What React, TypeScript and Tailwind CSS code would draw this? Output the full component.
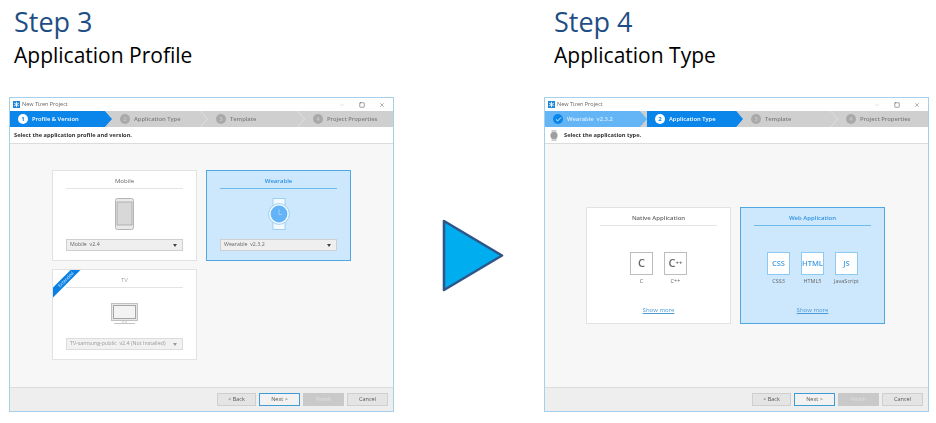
import { Minus, Square, X, Check } from "lucide-react";

type StepDef = { n: string; label: string; width: string; state: "done" | "active" | "idle" };

function Chevron({ color }: { color: string }) {
  return (
    <svg className="absolute right-0 top-0 h-4 w-[8px]" viewBox="0 0 8 16">
      <path d="M0.5 0 L7.5 8 L0.5 16" fill="none" stroke={color} strokeWidth="0.7" />
    </svg>
  );
}

function StepItem({ step, next }: { step: StepDef; next?: StepDef }) {
  const fill = step.state === "done" ? "#63b5f6" : "#0a85ea";
  return (
    <div className={`relative flex h-4 shrink-0 items-center ${step.width}`}>
      {step.state !== "idle" && (
        <svg className="absolute left-0 top-0 h-4 w-full" preserveAspectRatio="none" viewBox="0 0 100 16">
          <polygon points="0,0 93,0 100,8 93,16 0,16" fill={fill} />
        </svg>
      )}
      {step.state === "idle" && next && <Chevron color="#e6e6e6" />}
      <div
        className={`relative ml-[8px] flex h-[10px] w-[10px] items-center justify-center rounded-full text-[6px] font-bold ${
          step.state === "idle" ? "bg-[#a9a9a9] text-[#c6c6c6]" : step.state === "active" ? "bg-white text-[#0a85ea]" : "bg-[#0a85ea] text-white"
        }`}
      >
        {step.state === "done" ? <Check size={7} strokeWidth={3} /> : step.n}
      </div>
      <span
        className={`relative ml-[4px] whitespace-pre text-[5.8px] font-semibold ${
          step.state === "idle" ? "text-[#7d7d7d]" : step.state === "done" ? "text-[#dbeeff]" : "text-white"
        }`}
      >
        {step.label}
      </span>
    </div>
  );
}

function TizenLogo() {
  return (
    <svg className="h-[7px] w-[7px]" viewBox="0 0 8 8">
      <rect width="8" height="8" fill="#1c86d8" />
      <path d="M4 1 V7 M1.4 2.5 L6.6 5.5 M1.4 5.5 L6.6 2.5" stroke="#fff" strokeWidth="1" />
    </svg>
  );
}

function Dropdown({ label, dim }: { label: string; dim?: boolean }) {
  return (
    <div className={`flex h-3 items-center justify-between border px-[3px] text-[5.3px] ${dim ? "border-[#dcdcdc] bg-[#f1f1f1] text-[#9a9a9a]" : "border-[#cfcfcf] bg-[#efefef] text-[#666]"}`}>
      <span className="whitespace-pre">{label}</span>
      <span className={`mr-[2px] h-0 w-0 border-x-[2.5px] border-t-[3px] border-x-transparent ${dim ? "border-t-[#999]" : "border-t-[#444]"}`} />
    </div>
  );
}

function PhoneIcon() {
  return (
    <svg className="h-8 w-[19px]" viewBox="0 0 19 32">
      <rect x="0.5" y="0.5" width="18" height="31" rx="2" fill="#e9e9e9" stroke="#b5b5b5" />
      <rect x="2" y="4" width="15" height="23" fill="#d8d8d8" stroke="#9e9e9e" strokeWidth="0.7" />
    </svg>
  );
}

function WatchIcon() {
  return (
    <svg className="h-8 w-[22px]" viewBox="0 0 22 32">
      <rect x="5" y="0.5" width="12" height="7" fill="#f3faff" stroke="#8fc8ef" strokeWidth="0.8" />
      <rect x="5" y="24.5" width="12" height="7" fill="#f3faff" stroke="#8fc8ef" strokeWidth="0.8" />
      <circle cx="11" cy="16" r="10.4" fill="#f3faff" stroke="#8fc8ef" strokeWidth="0.8" />
      <circle cx="11" cy="16" r="8.4" fill="#62b4f7" />
      <path d="M11 11 V16.5 H14" fill="none" stroke="#a8d6fa" strokeWidth="0.8" />
    </svg>
  );
}

function TvIcon() {
  return (
    <svg className="h-[21px] w-[27px]" viewBox="0 0 27 21">
      <rect x="0.5" y="0.5" width="26" height="17" fill="#e8e8e8" stroke="#c0c0c0" />
      <rect x="2.5" y="2.5" width="22" height="13" fill="#f3f3f3" stroke="#a5a5a5" />
      <path d="M12 18 V20 M15 18 V20 M3 20.5 H24" stroke="#b5b5b5" strokeWidth="0.8" />
    </svg>
  );
}

function ProfileCard({ title, select, icon, on, dim, badge }: { title: string; select: string; icon: React.ReactNode; on?: boolean; dim?: boolean; badge?: boolean }) {
  return (
    <div className={`relative flex h-[91px] w-[145px] flex-col overflow-hidden border px-[13px] ${on ? "border-[#4fa9e0] bg-[#cde7fd]" : "border-[#e2e2e2] bg-white"}`}>
      <div className={`mt-[6px] text-center text-[6px] leading-[8px] ${on ? "font-semibold text-[#2f92e0]" : dim ? "text-[#a5a5a5]" : "text-[#666]"}`}>{title}</div>
      <div className={`mt-[3px] h-px ${on ? "bg-[#6fbcec]" : "bg-[#e4e4e4]"}`} />
      <div className="flex h-[50px] items-center justify-center">{icon}</div>
      <Dropdown label={select} dim={dim} />
      {badge && (
        <div className="absolute left-[-17px] top-[6px] w-[60px] -rotate-45 bg-[#0a80e4] text-center text-[4.5px] leading-[7px] text-[#d5ebff]">Extended</div>
      )}
    </div>
  );
}

function LangTile({ mark, small, label, on }: { mark: string; small?: string; label: string; on?: boolean }) {
  return (
    <div className="flex w-[24px] flex-col items-center">
      <div
        className={`flex h-[23px] w-[23px] items-center justify-center border bg-white font-semibold ${
          on ? "border-[#8ccaf3] text-[7.5px] font-bold text-[#3f9be2]" : "border-[#bdbdbd] text-[11px] text-[#666]"
        }`}
      >
        {mark}
        {small && <span className="text-[6px] font-bold">{small}</span>}
      </div>
      <div className="mt-[2px] whitespace-nowrap text-[5.5px] leading-[8px] text-[#666]">{label}</div>
    </div>
  );
}

function TypeCard({ title, on, children }: { title: string; on?: boolean; children: React.ReactNode }) {
  return (
    <div className={`flex h-[117px] w-[145px] flex-col border px-[13px] ${on ? "border-[#4fa9e0] bg-[#cde7fd]" : "border-[#e2e2e2] bg-white"}`}>
      <div className={`mt-[6px] text-center text-[6px] font-semibold leading-[8px] ${on ? "text-[#2f92e0]" : "text-[#666]"}`}>{title}</div>
      <div className={`mt-[3px] h-px ${on ? "bg-[#6fbcec]" : "bg-[#e4e4e4]"}`} />
      <div className="mt-[26px] flex justify-center gap-[10px]">{children}</div>
      <div className="mt-[21px] text-center text-[6px] leading-[8px] text-[#4a9ad6] underline">Show more</div>
    </div>
  );
}

function FooterButton({ label, kind, width }: { label: string; kind?: "focus" | "off"; width: string }) {
  const look =
    kind === "focus"
      ? "border-[#3d9bd6] bg-[#f2f2f2] text-[#555]"
      : kind === "off"
        ? "border-[#c9c9c9] bg-[#c9c9c9] text-[#e2e2e2]"
        : "border-[#cfcfcf] bg-[#e4e4e4] text-[#555]";
  return <div className={`flex h-[13px] items-center justify-center border text-[5.5px] ${width} ${look}`}>{label}</div>;
}

function ProjectWindow({ steps, prompt, watchIcon, children }: { steps: StepDef[]; prompt: string; watchIcon?: boolean; children: React.ReactNode }) {
  return (
    <div className="flex h-[315px] w-[385px] flex-col border border-[#a4d0ec] bg-white blur-[0.5px]">
      <div className="flex h-[13px] items-center pl-[3px] pr-[8px]">
        <TizenLogo />
        <span className="ml-[2px] text-[5.5px] text-[#666]">New Tizen Project</span>
        <div className="ml-auto flex items-center gap-[14px] text-[#666]">
          <Minus size={6} className="text-[#cfcfcf]" />
          <Square size={6} strokeWidth={2.5} />
          <X size={6} strokeWidth={2} />
        </div>
      </div>
      <div className="flex h-4 bg-[#cfcfcf]">
        {steps.map((s, i) => (
          <StepItem key={s.n} step={s} next={steps[i + 1]} />
        ))}
      </div>
      <div className="flex h-[17px] items-center border-b border-[#dcdcdc] pl-[4px] pt-[1px] text-[5.7px] font-bold text-[#333]">
        {watchIcon && (
          <svg className="mr-[6px] ml-[1px] h-[11px] w-[8px]" viewBox="0 0 8 11">
            <rect x="1.5" y="0" width="5" height="11" fill="#cfcfcf" />
            <circle cx="4" cy="5.5" r="3.6" fill="#9e9e9e" />
          </svg>
        )}
        {prompt}
      </div>
      <div className="flex flex-1 bg-[#f7f7f7]">{children}</div>
      <div className="flex h-[24px] items-center justify-end gap-[3px] border-t border-[#dddddd] bg-[#eeeeee] pr-[5px]">
        <FooterButton label="< Back" width="w-[39px]" />
        <FooterButton label="Next >" kind="focus" width="w-[41px]" />
        <FooterButton label="Finish" kind="off" width="w-[41px]" />
        <FooterButton label="Cancel" width="w-[41px]" />
      </div>
    </div>
  );
}

const profileSteps: StepDef[] = [
  { n: "1", label: "Profile & Version", width: "w-[102px]", state: "active" },
  { n: "2", label: "Application Type", width: "w-[96px]", state: "idle" },
  { n: "3", label: "Template", width: "w-[97px]", state: "idle" },
  { n: "4", label: "Project Properties", width: "w-[88px]", state: "idle" },
];

const typeSteps: StepDef[] = [
  { n: "1", label: "Wearable  v2.3.2", width: "w-[102px]", state: "done" },
  { n: "2", label: "Application Type", width: "w-[96px]", state: "active" },
  { n: "3", label: "Template", width: "w-[95px]", state: "idle" },
  { n: "4", label: "Project Properties", width: "w-[90px]", state: "idle" },
];

function Heading({ step, title }: { step: string; title: string }) {
  return (
    <div className="h-[97px]">
      <div className="pt-[3px] text-[27px] leading-[38px] text-[#1f4e85]">{step}</div>
      <div className="text-[21px] leading-[28px] text-black">{title}</div>
    </div>
  );
}

export default function App() {
  return (
    <div className="flex h-[423px] w-[936px] bg-white font-['Open_Sans',sans-serif]">
      <div className="ml-[9px] w-[385px] shrink-0">
        <div className="pl-[5px]">
          <Heading step="Step 3" title="Application Profile" />
        </div>
        <ProjectWindow steps={profileSteps} prompt="Select the application profile and version.">
          <div className="ml-[42px] mt-[26px] grid grid-cols-[145px_145px] content-start gap-x-[9px] gap-y-[8px]">
            <ProfileCard title="Mobile" select="Mobile  v2.4" icon={<PhoneIcon />} />
            <ProfileCard title="Wearable" select="Wearable  v2.3.2" icon={<WatchIcon />} on />
            <ProfileCard title="TV" select="TV-samsung-public  v2.4 (Not Installed)" icon={<TvIcon />} dim badge />
          </div>
        </ProjectWindow>
      </div>

      <svg className="ml-[48px] mt-[219px] h-[73px] w-[63px] shrink-0" viewBox="0 0 63 73">
        <polygon points="2,2 60,36.5 2,71" fill="#00aeef" stroke="#2f5689" strokeWidth="2.6" strokeLinejoin="round" />
      </svg>

      <div className="ml-[39px] w-[385px] shrink-0">
        <div className="pl-[10px]">
          <Heading step="Step 4" title="Application Type" />
        </div>
        <ProjectWindow steps={typeSteps} prompt="Select the application type." watchIcon>
          <div className="flex flex-1 items-center justify-center gap-[9px] pr-[2px]">
            <TypeCard title="Native Application">
              <LangTile mark="C" label="C" />
              <LangTile mark="C" small="++" label="C++" />
            </TypeCard>
            <TypeCard title="Web Application" on>
              <LangTile mark="CSS" label="CSS3" on />
              <LangTile mark="HTML" label="HTML5" on />
              <LangTile mark="JS" label="JavaScript" on />
            </TypeCard>
          </div>
        </ProjectWindow>
      </div>
    </div>
  );
}
